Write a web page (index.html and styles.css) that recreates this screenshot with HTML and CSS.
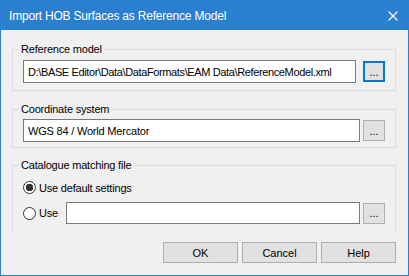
FILE: index.html
```html
<!DOCTYPE html>
<html lang="en">
<head>
    <meta charset="UTF-8">
    <title>Import HOB Surfaces as Reference Model</title>
    <link rel="stylesheet" href="styles.css">
</head>
<body>
    <div class="window">
        <div class="titlebar">
            <span class="title">Import HOB Surfaces as Reference Model</span>
            <svg class="close" width="10" height="10" viewBox="0 0 10 10">
                <path d="M0.5 0.5 L9.5 9.5 M9.5 0.5 L0.5 9.5" stroke="#fff" stroke-width="1.1" fill="none"/>
            </svg>
        </div>
        <div class="content">
            <fieldset class="group group-ref">
                <legend>Reference model</legend>
                <div class="row row-wide">
                    <input type="text" class="text text-path" value="D:\BASE Editor\Data\DataFormats\EAM Data\ReferenceModel.xml">
                    <button class="browse focused">...</button>
                </div>
            </fieldset>

            <fieldset class="group group-coord">
                <legend>Coordinate system</legend>
                <div class="row">
                    <input type="text" class="text" value="WGS 84 / World Mercator">
                    <button class="browse">...</button>
                </div>
            </fieldset>

            <fieldset class="group group-cat">
                <legend>Catalogue matching file</legend>
                <label class="option">
                    <input type="radio" name="cat" checked>
                    <span>Use default settings</span>
                </label>
                <div class="row option-file">
                    <label class="option">
                        <input type="radio" name="cat">
                        <span>Use</span>
                    </label>
                    <input type="text" class="text text-file" value="">
                    <button class="browse">...</button>
                </div>
            </fieldset>

            <div class="buttons">
                <button class="btn">OK</button>
                <button class="btn">Cancel</button>
                <button class="btn">Help</button>
            </div>
        </div>
    </div>
</body>
</html>
```

FILE: styles.css
```css
* {
    box-sizing: border-box;
}

body {
    margin: 0;
    font-family: "Liberation Sans", Arial, sans-serif;
    font-size: 11px;
    color: #000;
    background: #f0f0f0;
}

.window {
    width: 409px;
    height: 276px;
    border: 1px solid #2b7fcf;
    background: #f0f0f0;
    display: flex;
    flex-direction: column;
    overflow: hidden;
}

.titlebar {
    height: 29px;
    background: #2b7fcf;
    color: #fff;
    display: flex;
    align-items: center;
    justify-content: space-between;
    padding: 0 10px 0 8px;
}

.title {
    font-size: 12px;
    letter-spacing: -0.2px;
}

.close {
    display: block;
}

.content {
    padding: 0 12px 0 11px;
}

.group {
    margin: 0;
    min-width: 0;
    border: 1px solid #dcdcdc;
    padding: 4px 10px 7px 10px;
}

.group legend {
    padding: 0 2px;
    margin-left: -4px;
    line-height: 14px;
    letter-spacing: -0.2px;
}

.group-ref {
    margin-top: 12px;
}

.group-coord {
    margin-top: 11px;
    padding-top: 3px;
    padding-bottom: 5px;
}

.group-cat {
    margin-top: 10px;
    padding-top: 9px;
    padding-bottom: 8px;
    border-bottom: none;
}

.row {
    display: flex;
    align-items: center;
    gap: 3px;
}

.row-wide {
    gap: 7px;
}

.text {
    flex: 1;
    min-width: 0;
    height: 23px;
    border: 1px solid #7a7a7a;
    background: #fff;
    padding: 0 4px;
    margin: 0;
    font-family: inherit;
    font-size: 11px;
    letter-spacing: -0.2px;
    color: #000;
    outline: none;
}

.text-path {
    letter-spacing: -0.37px;
}

.text-file {
    height: 22px;
    margin-left: 5px;
}

.browse {
    width: 22px;
    height: 21px;
    margin: 0;
    padding: 0;
    background: #e1e1e1;
    border: 1px solid #adadad;
    font-family: inherit;
    font-size: 11px;
    color: #000;
}

.browse.focused {
    border: 2px solid #0078d7;
}

.option {
    display: flex;
    align-items: center;
    gap: 3px;
    letter-spacing: -0.2px;
}

.option input {
    appearance: none;
    -webkit-appearance: none;
    width: 13px;
    height: 13px;
    margin: 0;
    border: 1px solid #333;
    border-radius: 50%;
    background: #fff;
}

.option input:checked {
    background: radial-gradient(circle, #333 0 3.5px, #fff 4px);
}

.option-file {
    margin-top: 8px;
}

.buttons {
    display: flex;
    justify-content: flex-end;
    gap: 4px;
    margin-top: 10px;
}

.btn {
    width: 75px;
    height: 21px;
    margin: 0;
    padding: 0;
    background: #e1e1e1;
    border: 1px solid #adadad;
    font-family: inherit;
    font-size: 11px;
    color: #000;
}
```
